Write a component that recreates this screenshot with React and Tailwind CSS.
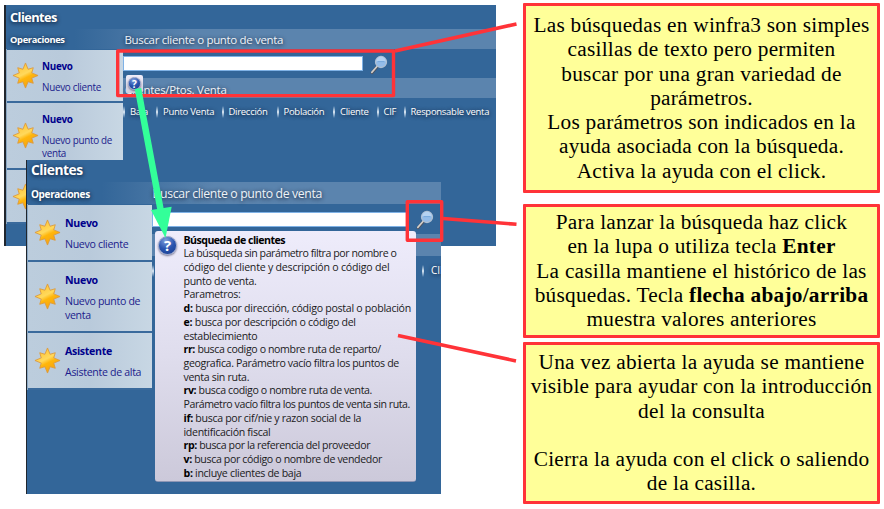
import React from "react";

const UI = "font-['Open_Sans','Noto_Sans',sans-serif]";
const GLOW = "[text-shadow:0_1px_4px_rgba(0,10,30,0.9)]";

function Sun() {
  const points = Array.from({ length: 16 }, (_, i) => {
    const r = i % 2 ? 7 : i % 4 === 0 ? 13 : 11.4;
    const a = (i * Math.PI) / 8;
    return `${(13 + r * Math.sin(a)).toFixed(2)},${(13 - r * Math.cos(a)).toFixed(2)}`;
  }).join(" ");
  return (
    <svg viewBox="-1 -1 28 28" className="size-[27px] shrink-0">
      <defs>
        <linearGradient id="sun" x1="0.2" y1="0" x2="0.7" y2="1">
          <stop offset="0" stopColor="#ffc02e" />
          <stop offset="0.45" stopColor="#ffd95c" />
          <stop offset="0.6" stopColor="#ffb60c" />
          <stop offset="1" stopColor="#f3a012" />
        </linearGradient>
      </defs>
      <polygon points={points} fill="url(#sun)" stroke="#dc9a3c" strokeWidth="0.9" strokeLinejoin="round" />
    </svg>
  );
}

function Magnifier({ className }) {
  return (
    <svg viewBox="0 0 18 20" className={className}>
      <path d="M2 17.8 7.6 11.4" stroke="#4c5360" strokeWidth="2.8" strokeLinecap="round" />
      <path d="M1.8 17.4 7.4 11" stroke="#d4cfca" strokeWidth="1.6" strokeLinecap="round" />
      <circle cx="11" cy="7" r="5.5" fill="#93bce9" stroke="#aebfd2" strokeWidth="1.3" />
      <path d="M6.2 6.500a4.800 4.800 0 0 1 9.600 0z" fill="#b4d2f2" />
      <path d="M7.500 6.600h7" stroke="#6a9fd8" strokeWidth="0.8" />
    </svg>
  );
}

function Help({ className }) {
  return (
    <span
      className={`flex shrink-0 items-center justify-center rounded-full border border-[#8d9cc4] bg-[radial-gradient(circle_at_40%_20%,#7f9fdc,#2a55b0_50%,#173a8c)] font-bold leading-none text-white shadow-[0_1px_2px_rgba(0,0,40,0.5)] ${className}`}
    >
      ?
    </span>
  );
}

function Card({ title, text, className, pad, titleClass, textClass, textBox }) {
  return (
    <div
      className={`flex items-center border-b-2 border-[#3a6a9c] bg-linear-to-r from-[#bccddd] via-[#b9cadb] to-[#c8d7e4] text-[#00008b] ${pad} ${className}`}
    >
      <Sun />
      <div className={textBox}>
        <div className={`font-bold ${titleClass}`}>{title}</div>
        <div className={`text-[#1c1c8c] ${textClass}`}>{text}</div>
      </div>
    </div>
  );
}

const columns = [
  ["Baja", "w-[33px]"],
  ["Punto Venta", "w-[65.5px]"],
  ["Dirección", "w-[55px]"],
  ["Población", "w-[56.5px]"],
  ["Cliente", "w-[43.5px]"],
  ["CIF", "w-[27px]"],
  ["Responsable venta", "w-[95px]"],
];

function Separator({ className }) {
  return <span className={`w-[2px] shrink-0 bg-linear-to-b from-transparent via-[#dbe8f4] to-transparent ${className}`} />;
}

function BackWindow() {
  const card = {
    pad: "pl-[5px]",
    titleClass: "text-[9.9px] leading-[13px] tracking-[-0.03em]",
    textClass: "mt-[8px] text-[9.9px] leading-[13px] tracking-[-0.03em]",
    textBox: "w-[82px] pl-[3px] pt-[2px]",
  };
  return (
    <section className="absolute left-[4px] top-[5px] flex h-[241px] w-[492px] flex-col overflow-hidden border-l-2 border-[#20262e] bg-[#336699] text-white">
      <h1 className={`h-[24px] pl-[4px] text-[12.8px] font-bold leading-[25px] tracking-[-0.045em] ${GLOW}`}>Clientes</h1>
      <div className="flex h-[20px] items-center bg-[linear-gradient(to_right,#336699_14%,#5b84ae_38%)] pt-[2px]">
        <h2 className={`w-[118.5px] pl-[4px] text-[9.3px] font-bold tracking-[-0.035em] ${GLOW}`}>Operaciones</h2>
        <span className={`text-[11.5px] tracking-[-0.03em] text-[#eef3f8] ${GLOW}`}>Buscar cliente o punto de venta</span>
      </div>
      <div className="flex">
        <aside className="w-[117px] shrink-0 border-l border-[#8aa8c4] pt-px">
          <Card {...card} title="Nuevo" text="Nuevo cliente" className="h-[53px]" />
          <Card {...card} title="Nuevo" text="Nuevo punto de venta" className="h-[67px]" />
          <Card {...card} title="Asistente" text="Asistente de alta" className="h-[54px]" />
        </aside>
        <main className="flex-1">
          <div className="flex h-[28.5px] items-center pt-px">
            <div className="h-[15px] w-[240px] border border-[#7fb2e6] bg-white" />
            <Magnifier className="ml-[6.5px] mt-[2px] h-[20px] w-[18px]" />
          </div>
          <div className={`h-[20.5px] bg-[#5b84ae] pl-[2px] text-[11.4px] leading-[23px] tracking-[-0.02em] text-[#eef3f8] ${GLOW}`}>
            Clientes/Ptos. Venta
          </div>
          <div className="flex items-center pt-[6px] text-[9.5px] leading-[15px] tracking-[-0.03em]">
            {columns.map(([label, width]) => (
              <div key={label} className={`flex shrink-0 items-center whitespace-nowrap ${width}`}>
                <Separator className="h-[12px]" />
                <span className={`pl-[5px] ${GLOW}`}>{label}</span>
              </div>
            ))}
          </div>
        </main>
      </div>
    </section>
  );
}

const help = [
  ["", "La búsqueda sin parámetro filtra por nombre o", "tracking-[-0.042em]"],
  ["", "código del cliente y descripción o código del", "tracking-[-0.021em]"],
  ["", "punto de venta."],
  ["", "Parametros:"],
  ["d:", "busca por dirección, código postal o población", "tracking-[-0.026em]"],
  ["e:", "busca por descripción o código del", "tracking-[-0.027em]"],
  ["", "establecimiento"],
  ["rr:", "busca codigo o nombre ruta de reparto/", "tracking-[-0.036em]"],
  ["", "geografica. Parámetro vacío filtra los puntos de", "tracking-[-0.034em]"],
  ["", "venta sin ruta."],
  ["rv:", "busca codigo o nombre ruta de venta.", "tracking-[-0.036em]"],
  ["", "Parámetro vacío filtra los puntos de venta sin ruta.", "tracking-[-0.041em]"],
  ["if:", "busca por cif/nie y razon social de la"],
  ["", "identificación fiscal"],
  ["rp:", "busca por la referencia del proveedor", "tracking-[-0.037em]"],
  ["v:", "busca por código o nombre de vendedor", "tracking-[-0.034em]"],
  ["b:", "incluye clientes de baja"],
];

function FrontWindow() {
  const card = {
    pad: "pl-[5.5px]",
    titleClass: "text-[10.6px] leading-[14px] tracking-[-0.03em]",
    textClass: "mt-[8px] text-[10.6px] leading-[13.7px] tracking-[-0.03em]",
    textBox: "w-[86px] pl-[4.5px] pt-[2px]",
  };
  return (
    <section className="absolute left-[26px] top-[160px] flex h-[334px] w-[415px] flex-col overflow-hidden border-l border-[#20262e] bg-[#336699] text-white">
      <h1 className={`h-[22px] pl-[4px] text-[13.8px] font-bold leading-[20px] tracking-[-0.035em] ${GLOW}`}>Clientes</h1>
      <div className="flex h-[22px] items-center bg-[linear-gradient(to_right,#336699_18%,#5b84ae_45%)] pt-[2px]">
        <h2 className={`w-[125.5px] pl-[4px] text-[10px] font-bold tracking-[-0.035em] ${GLOW}`}>Operaciones</h2>
        <span className={`text-[12.3px] tracking-[-0.03em] text-[#eef3f8] ${GLOW}`}>Buscar cliente o punto de venta</span>
      </div>
      <div className="flex">
        <aside className="w-[125px] shrink-0 border-l border-[#8aa8c4] pt-px">
          <Card {...card} title="Nuevo" text="Nuevo cliente" className="h-[57px]" />
          <Card {...card} title="Nuevo" text="Nuevo punto de venta" className="h-[71px]" />
          <Card {...card} title="Asistente" text="Asistente de alta" className="h-[57px]" />
        </aside>
        <main className="flex-1">
          <div className="flex h-[30px] items-center pt-px">
            <div className="h-[15px] w-[256px] border border-[#7fb2e6] bg-white" />
            <Magnifier className="ml-[8px] mt-px h-[20px] w-[18px]" />
          </div>
          <div className="h-[22px] bg-[#5b84ae]" />
          <div className="flex items-center pt-[7px] text-[10px] leading-[15px]">
            <Separator className="h-[12px]" />
            <Separator className="ml-[268px] h-[12px]" />
            <span className={`pl-[7px] ${GLOW}`}>CIF</span>
          </div>
        </main>
      </div>
      <div className="absolute left-[128px] top-[71px] flex h-[251px] w-[261px] rounded-[3px] border-b border-[#8d96b5] bg-linear-to-b from-[#eeecfb] via-[#dfdded] to-[#ccc9da] pl-[3px] pt-[2.5px] text-black">
        <Help className="mt-[2px] size-[19px] text-[15px]" />
        <div className="whitespace-nowrap pl-[6.5px] text-[10.6px] leading-[13.72px] tracking-[-0.03em]">
          <div className="font-bold tracking-[-0.05em]">Búsqueda de clientes</div>
          {help.map(([key, text, tracking = ""]) => (
            <div key={key + text} className={tracking}>
              {key && <b>{key} </b>}
              <span className="text-[#1b1b22]">{text}</span>
            </div>
          ))}
        </div>
      </div>
    </section>
  );
}

function Note({ className, children }) {
  return (
    <div className={`w-[357px] rounded-[1px] border-3 border-[#ff3338] bg-[#ffff99] text-center text-[21.3px] leading-[24.25px] tracking-[0.25px] whitespace-nowrap text-black ${className}`}>
      {children}
    </div>
  );
}

export default function App() {
  return (
    <div className={`relative flex h-[509px] w-[884px] overflow-hidden bg-white ${UI}`}>
      <div className="relative w-[523px] shrink-0">
        <BackWindow />
        <div className="absolute left-[126px] top-[75px] flex h-[18px] w-[17px] items-start justify-center rounded-[2px] bg-linear-to-b from-[#f0eefb] to-[#cfcddd] pt-[2px]">
          <Help className="size-[13px] text-[10px]" />
        </div>
        <FrontWindow />
      </div>
      <aside className="flex flex-col pt-[3px] font-['Liberation_Serif',serif]">
        <Note className="h-[190px] pt-[7px]">
          <p>Las búsquedas en winfra3 son simples</p>
          <p>casillas de texto pero permiten</p>
          <p>buscar por una gran variedad de</p>
          <p>parámetros.</p>
          <p>Los parámetros son indicados en la</p>
          <p>ayuda asociada con la búsqueda.</p>
          <p>Activa la ayuda con el click.</p>
        </Note>
        <Note className="mt-[11px] h-[134px] pt-[3px]">
          <p>Para lanzar la búsqueda haz click</p>
          <p>en la lupa o utiliza tecla <b>Enter</b></p>
          <p>La casilla mantiene el histórico de las</p>
          <p>búsquedas. Tecla <b>flecha abajo/arriba</b></p>
          <p>muestra valores anteriores</p>
        </Note>
        <Note className="mt-[4px] h-[162px] pt-[5px]">
          <p>Una vez abierta la ayuda se mantiene</p>
          <p>visible para ayudar con la introducción</p>
          <p>del la consulta</p>
          <p>&nbsp;</p>
          <p>Cierra la ayuda con el click o saliendo</p>
          <p>de la casilla.</p>
        </Note>
      </aside>
      <svg viewBox="0 0 884 509" className="pointer-events-none absolute inset-0 h-[509px] w-[884px]" fill="none">
        <g stroke="#ff3338" strokeLinejoin="round">
          <rect x="117.7" y="51" width="275.8" height="44.6" strokeWidth="3.4" />
          <rect x="407.3" y="201.7" width="34.4" height="38.6" strokeWidth="3.4" />
          <path d="M395 51 516.500 24M443 218.500 516.500 224.300M398 335.500 516 361" strokeWidth="3.6" />
        </g>
        <path d="M138 88.500 144 121 161 212" stroke="#33ff99" strokeWidth="6.6" />
        <path d="M151 210 171.700 206.800 165.500 238Z" fill="#33ff99" />
      </svg>
    </div>
  );
}
